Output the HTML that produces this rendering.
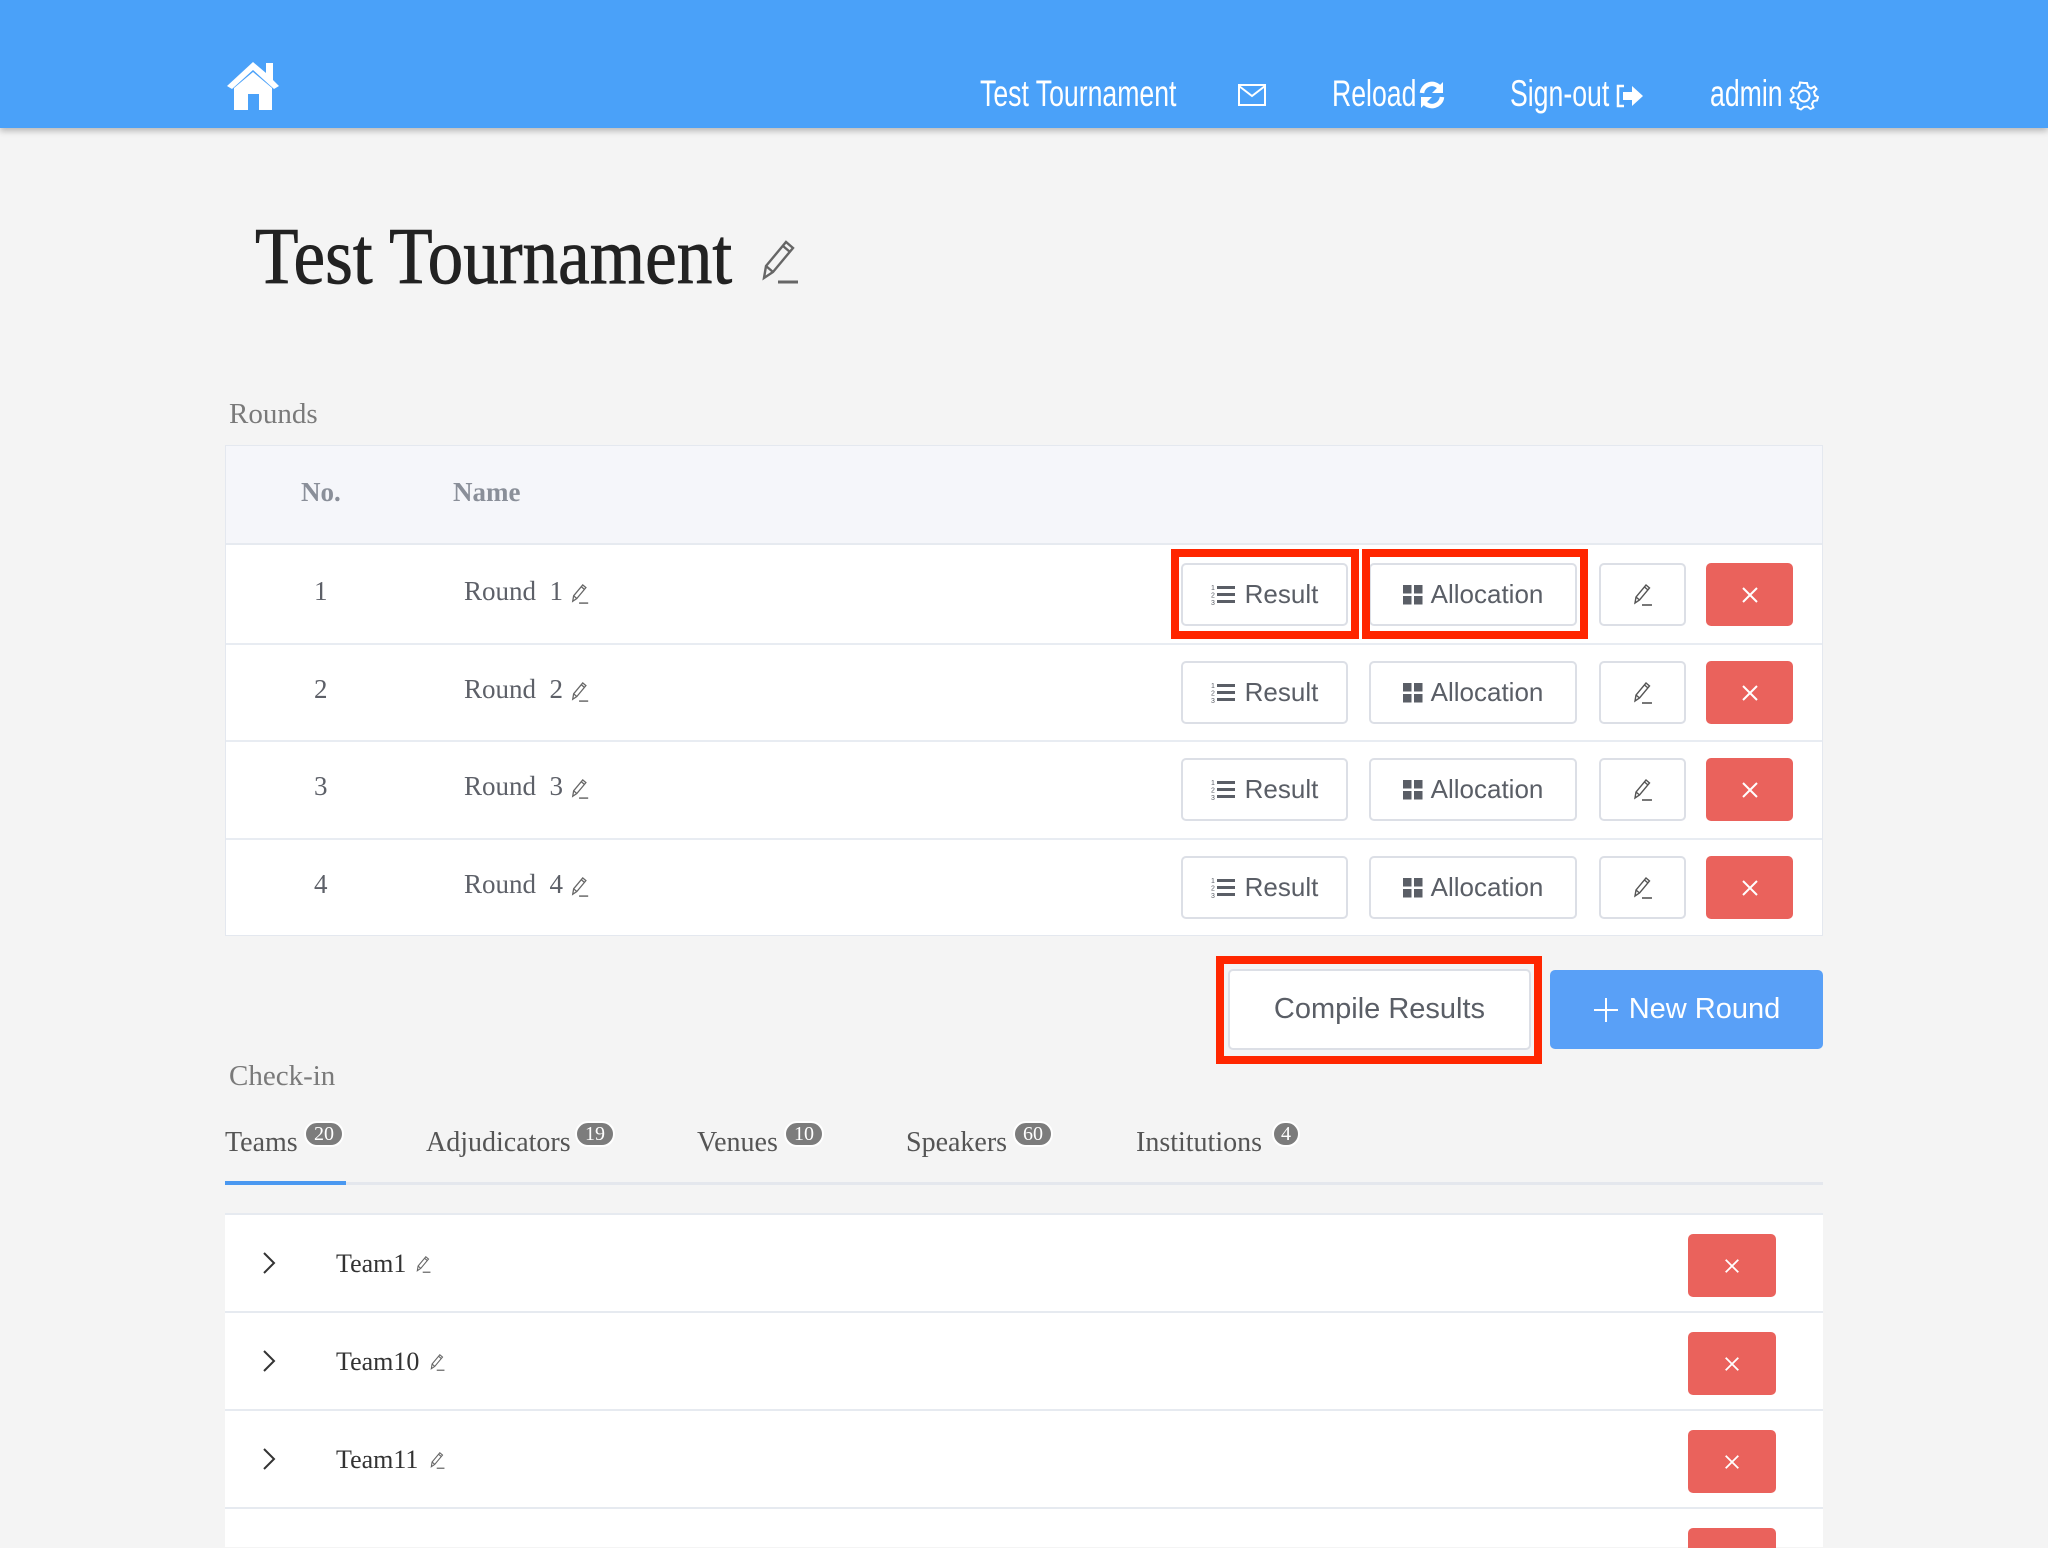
<!DOCTYPE html>
<html><head><meta charset="utf-8"><style>
*{box-sizing:border-box;margin:0;padding:0}
body{width:2048px;height:1536px;background:#f4f4f4;position:relative;overflow:hidden;font-family:"Liberation Serif",serif}
.abs{position:absolute}
.hdr{left:0;top:0;width:2048px;height:128px;background:#4aa1f9;box-shadow:0 3px 6px rgba(0,0,0,.25)}
.nav{position:absolute;top:72px;color:#fff;font-family:"Liberation Sans",sans-serif;font-size:37px;line-height:44px;white-space:nowrap;transform:scaleX(.72);transform-origin:left}
.lbl{font-size:29px;color:#7a7a7a}
.table{left:225px;top:445px;width:1598px;height:491px;background:#fff;border:1px solid #e4e8ef}
.thead{left:0;top:0;width:100%;height:99px;background:#f5f6fa;border-bottom:2px solid #e6eaf0}
.th{top:28px;font-size:27px;font-weight:bold;color:#8a8f99}
.cell{font-size:27px;color:#5d6068}
.btn{position:absolute;height:63px;background:#fff;border:2px solid #dcdfe6;border-radius:5px;font-family:"Liberation Sans",sans-serif;font-size:26px;color:#5a5e66;display:flex;align-items:center;justify-content:center;gap:8px}
.del{position:absolute;background:#ea625c;border-radius:5px;display:flex;align-items:center;justify-content:center}
.hl{position:absolute;border:8px solid #ff2600}
.badge{position:absolute;background:#7c7c7c;color:#fff;border:2px solid #fff;border-radius:14px;font-size:20px;line-height:22px;height:26px;text-align:center}
.tab{position:absolute;top:1124px;font-size:28px;color:#555}
.lrow{left:225px;width:1598px;height:98px;background:#fff;border-top:2px solid #e6eaf0}
</style></head><body>
<div class="abs hdr"></div>
<svg class="abs" style="left:224px;top:58px" width="60" height="54" viewBox="0 0 60 54">
<path d="M29 4 L3 28 L8 31 L29 12 L50 31 L55 28 L49 22 V5 H42 V15 Z" fill="#fff"/>
<path d="M10 30 L29 14 L48 30 V52 H35 V36 H24 V52 H10 Z" fill="#fff"/>
</svg>
<div class="nav" style="left:980px">Test Tournament</div>
<svg class="abs" style="left:1238px;top:84px" width="28" height="22" viewBox="0 0 28 22"><rect x="1" y="1" width="26" height="20" fill="none" stroke="#fff" stroke-width="2"/><path d="M1 2 L14 12 L27 2" fill="none" stroke="#fff" stroke-width="2"/></svg>
<div class="nav" style="left:1332px">Reload</div>
<svg class="abs" style="left:1418px;top:81px" width="28" height="28" viewBox="0 0 28 28"><path d="M4 12 A10 10 0 0 1 22 7" fill="none" stroke="#fff" stroke-width="4.5"/><path d="M25 1 V12 H14 Z" fill="#fff"/><path d="M24 16 A10 10 0 0 1 6 21" fill="none" stroke="#fff" stroke-width="4.5"/><path d="M3 27 V16 H14 Z" fill="#fff"/></svg>
<div class="nav" style="left:1510px">Sign-out</div>
<svg class="abs" style="left:1615px;top:83px" width="30" height="26" viewBox="0 0 30 26"><path d="M9 3 H3 V23 H9" fill="none" stroke="#fff" stroke-width="2.5"/><path d="M8 9 H17 V3 L28 13 L17 23 V17 H8 Z" fill="#fff"/></svg>
<div class="nav" style="left:1710px">admin</div>
<svg class="abs" style="left:1789px;top:81px" width="30" height="30" viewBox="0 0 30 30"><path d="M15 2 L18 2 L19 6 L22 7.5 L25.5 5.5 L27.5 8 L25 11 L26 14.5 L29 16 L28 19.5 L24.5 20 L23 23 L24.5 26.5 L21.5 28 L18.5 25.5 L15 26 L12 28.5 L8.5 27 L9 23 L6.5 21 L2.5 21.5 L1.5 18 L4.5 15.5 L4.5 12.5 L2 9.5 L4 6.5 L8 7.5 L10.5 5 L11 1.5 Z" fill="none" stroke="#fff" stroke-width="2"/><circle cx="15" cy="15" r="5.5" fill="none" stroke="#fff" stroke-width="2"/></svg>

<div class="abs" style="left:255px;top:212px;font-size:80px;color:#222;line-height:90px;transform:scaleX(.89);transform-origin:left;-webkit-text-stroke:0.8px #222">Test Tournament</div>
<svg class="abs" style="left:758px;top:238px" width="44" height="48" viewBox="0 0 22 24"><path d="M3 20 L4 14 L14 2 L17.5 5 L7.5 17 Z M4 14 L7.5 17 M12.5 4 L16 7" fill="none" stroke="#666" stroke-width="1.2"/><path d="M10 22 H20" stroke="#666" stroke-width="1.5"/></svg>

<div class="abs lbl" style="left:229px;top:398px">Rounds</div>
<div class="abs table">
 <div class="abs thead"></div>
 <div class="abs th" style="left:75px;top:31px">No.</div>
 <div class="abs th" style="left:227px;top:31px">Name</div>
</div>

<div class="abs" style="left:226px;top:643px;width:1596px;height:2px;background:#e8ecf2"></div>
<div class="abs" style="left:226px;top:740px;width:1596px;height:2px;background:#e8ecf2"></div>
<div class="abs" style="left:226px;top:838px;width:1596px;height:2px;background:#e8ecf2"></div>

<div class="abs cell" style="left:314px;top:576px">1</div>
<div class="abs cell" style="left:464px;top:576px">Round&nbsp;&nbsp;1</div>
<div class="abs cell" style="left:314px;top:674px">2</div>
<div class="abs cell" style="left:464px;top:674px">Round&nbsp;&nbsp;2</div>
<div class="abs cell" style="left:314px;top:771px">3</div>
<div class="abs cell" style="left:464px;top:771px">Round&nbsp;&nbsp;3</div>
<div class="abs cell" style="left:314px;top:869px">4</div>
<div class="abs cell" style="left:464px;top:869px">Round&nbsp;&nbsp;4</div>

<svg width="0" height="0" style="position:absolute"><defs>
<symbol id="pen" viewBox="0 0 22 24"><path d="M3 20 L4 14 L14 2 L17.5 5 L7.5 17 Z M4 14 L7.5 17 M12.5 4 L16 7" fill="none" stroke="currentColor" stroke-width="1.4"/><path d="M10 22 H20" stroke="currentColor" stroke-width="1.6"/></symbol>
<symbol id="ol" viewBox="0 0 26 22"><text x="0" y="6" font-size="7" font-family="Liberation Sans" fill="#5a5e66">1</text><text x="0" y="13.5" font-size="7" font-family="Liberation Sans" fill="#5a5e66">2</text><text x="0" y="21" font-size="7" font-family="Liberation Sans" fill="#5a5e66">3</text><rect x="6" y="2" width="18" height="3" fill="#5a5e66"/><rect x="6" y="9" width="18" height="3" fill="#5a5e66"/><rect x="6" y="16" width="18" height="3" fill="#5a5e66"/></symbol>
<symbol id="grid" viewBox="0 0 20 20"><rect x="0" y="0" width="8.5" height="8.5" fill="#5a5e66"/><rect x="11" y="0" width="8.5" height="8.5" fill="#5a5e66"/><rect x="0" y="11" width="8.5" height="8.5" fill="#5a5e66"/><rect x="11" y="11" width="8.5" height="8.5" fill="#5a5e66"/></symbol>
<symbol id="x" viewBox="0 0 20 20"><path d="M3 3 L17 17 M17 3 L3 17" stroke="#fff" stroke-width="2"/></symbol>
<symbol id="chev" viewBox="0 0 14 24"><path d="M2 2 L12 12 L2 22" fill="none" stroke="#333" stroke-width="2"/></symbol>
</defs></svg>

<svg class="abs" style="left:570px;top:583px;color:#666" width="20" height="22"><use href="#pen"/></svg>
<svg class="abs" style="left:570px;top:681px;color:#666" width="20" height="22"><use href="#pen"/></svg>
<svg class="abs" style="left:570px;top:778px;color:#666" width="20" height="22"><use href="#pen"/></svg>
<svg class="abs" style="left:570px;top:876px;color:#666" width="20" height="22"><use href="#pen"/></svg>

<div class="btn" style="left:1181px;top:563px;width:167px"><svg width="26" height="22"><use href="#ol"/></svg>Result</div>
<div class="btn" style="left:1369px;top:563px;width:208px"><svg width="20" height="20"><use href="#grid"/></svg>Allocation</div>
<div class="btn" style="left:1599px;top:563px;width:87px;color:#555"><svg width="22" height="24"><use href="#pen"/></svg></div>
<div class="del" style="left:1706px;top:563px;width:87px;height:63px"><svg width="20" height="20"><use href="#x"/></svg></div>

<div class="btn" style="left:1181px;top:661px;width:167px"><svg width="26" height="22"><use href="#ol"/></svg>Result</div>
<div class="btn" style="left:1369px;top:661px;width:208px"><svg width="20" height="20"><use href="#grid"/></svg>Allocation</div>
<div class="btn" style="left:1599px;top:661px;width:87px;color:#555"><svg width="22" height="24"><use href="#pen"/></svg></div>
<div class="del" style="left:1706px;top:661px;width:87px;height:63px"><svg width="20" height="20"><use href="#x"/></svg></div>

<div class="btn" style="left:1181px;top:758px;width:167px"><svg width="26" height="22"><use href="#ol"/></svg>Result</div>
<div class="btn" style="left:1369px;top:758px;width:208px"><svg width="20" height="20"><use href="#grid"/></svg>Allocation</div>
<div class="btn" style="left:1599px;top:758px;width:87px;color:#555"><svg width="22" height="24"><use href="#pen"/></svg></div>
<div class="del" style="left:1706px;top:758px;width:87px;height:63px"><svg width="20" height="20"><use href="#x"/></svg></div>

<div class="btn" style="left:1181px;top:856px;width:167px"><svg width="26" height="22"><use href="#ol"/></svg>Result</div>
<div class="btn" style="left:1369px;top:856px;width:208px"><svg width="20" height="20"><use href="#grid"/></svg>Allocation</div>
<div class="btn" style="left:1599px;top:856px;width:87px;color:#555"><svg width="22" height="24"><use href="#pen"/></svg></div>
<div class="del" style="left:1706px;top:856px;width:87px;height:63px"><svg width="20" height="20"><use href="#x"/></svg></div>

<div class="hl" style="left:1171px;top:549px;width:188px;height:90px"></div>
<div class="hl" style="left:1362px;top:549px;width:226px;height:90px"></div>

<div class="btn" style="left:1228px;top:969px;width:303px;height:81px;font-size:29px">Compile Results</div>
<div class="hl" style="left:1216px;top:956px;width:326px;height:108px"></div>
<div class="abs" style="left:1550px;top:970px;width:273px;height:79px;background:#59a0f7;border-radius:5px;color:#fff;font-family:'Liberation Sans',sans-serif;font-size:29px;display:flex;align-items:center;justify-content:center;gap:10px"><svg width="26" height="26"><path d="M13 1 V25 M1 13 H25" stroke="#fff" stroke-width="2"/></svg>New Round</div>

<div class="abs lbl" style="left:229px;top:1060px">Check-in</div>
<div class="tab" style="left:225px;top:1127px">Teams</div><div class="badge" style="left:304px;top:1121px;width:40px">20</div>
<div class="tab" style="left:426px;top:1127px">Adjudicators</div><div class="badge" style="left:575px;top:1121px;width:40px">19</div>
<div class="tab" style="left:697px;top:1127px">Venues</div><div class="badge" style="left:784px;top:1121px;width:40px">10</div>
<div class="tab" style="left:906px;top:1127px">Speakers</div><div class="badge" style="left:1013px;top:1121px;width:40px">60</div>
<div class="tab" style="left:1136px;top:1127px">Institutions</div><div class="badge" style="left:1272px;top:1121px;width:28px">4</div>
<div class="abs" style="left:225px;top:1182px;width:1598px;height:3px;background:#e4e7ed"></div>
<div class="abs" style="left:225px;top:1181px;width:121px;height:4px;background:#4a98f0"></div>

<div class="abs lrow" style="top:1213px"></div>
<div class="abs lrow" style="top:1311px"></div>
<div class="abs lrow" style="top:1409px"></div>
<div class="abs lrow" style="top:1507px;height:40px"></div>

<svg class="abs" style="left:262px;top:1251px" width="14" height="24"><use href="#chev"/></svg>
<svg class="abs" style="left:262px;top:1349px" width="14" height="24"><use href="#chev"/></svg>
<svg class="abs" style="left:262px;top:1447px" width="14" height="24"><use href="#chev"/></svg>
<div class="abs cell" style="left:336px;top:1249px;color:#333;font-size:26px">Team1</div>
<div class="abs cell" style="left:336px;top:1347px;color:#333;font-size:26px">Team10</div>
<div class="abs cell" style="left:336px;top:1445px;color:#333;font-size:26px">Team11</div>
<svg class="abs" style="left:415px;top:1255px;color:#666" width="17" height="19"><use href="#pen"/></svg>
<svg class="abs" style="left:429px;top:1353px;color:#666" width="17" height="19"><use href="#pen"/></svg>
<svg class="abs" style="left:429px;top:1451px;color:#666" width="17" height="19"><use href="#pen"/></svg>
<div class="del" style="left:1688px;top:1234px;width:88px;height:63px"><svg width="18" height="18"><use href="#x"/></svg></div>
<div class="del" style="left:1688px;top:1332px;width:88px;height:63px"><svg width="18" height="18"><use href="#x"/></svg></div>
<div class="del" style="left:1688px;top:1430px;width:88px;height:63px"><svg width="18" height="18"><use href="#x"/></svg></div>
<div class="del" style="left:1688px;top:1528px;width:88px;height:20px;border-radius:5px 5px 0 0"></div>
</body></html>
